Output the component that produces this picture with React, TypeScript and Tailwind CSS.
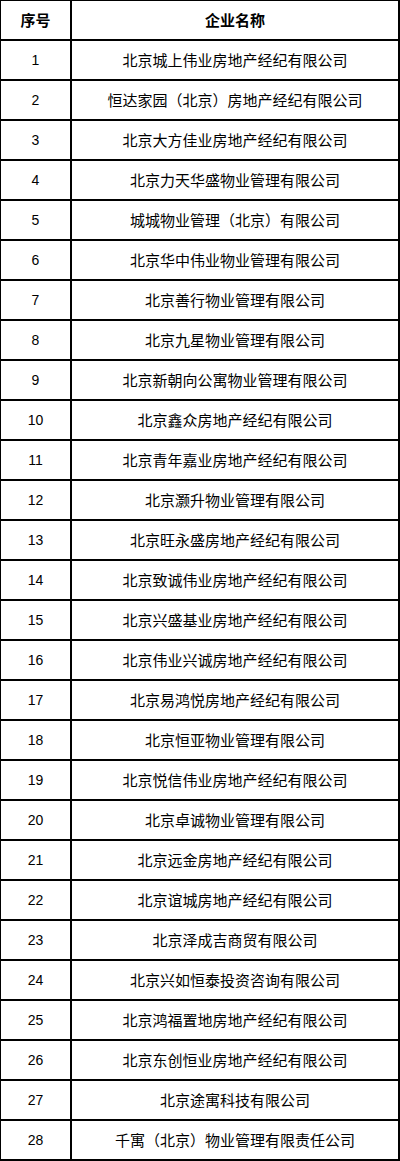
import React from "react";

const names = [
  "北京城上伟业房地产经纪有限公司",
  "恒达家园（北京）房地产经纪有限公司",
  "北京大方佳业房地产经纪有限公司",
  "北京力天华盛物业管理有限公司",
  "城城物业管理（北京）有限公司",
  "北京华中伟业物业管理有限公司",
  "北京善行物业管理有限公司",
  "北京九星物业管理有限公司",
  "北京新朝向公寓物业管理有限公司",
  "北京鑫众房地产经纪有限公司",
  "北京青年嘉业房地产经纪有限公司",
  "北京灏升物业管理有限公司",
  "北京旺永盛房地产经纪有限公司",
  "北京致诚伟业房地产经纪有限公司",
  "北京兴盛基业房地产经纪有限公司",
  "北京伟业兴诚房地产经纪有限公司",
  "北京易鸿悦房地产经纪有限公司",
  "北京恒亚物业管理有限公司",
  "北京悦信伟业房地产经纪有限公司",
  "北京卓诚物业管理有限公司",
  "北京远金房地产经纪有限公司",
  "北京谊城房地产经纪有限公司",
  "北京泽成吉商贸有限公司",
  "北京兴如恒泰投资咨询有限公司",
  "北京鸿福置地房地产经纪有限公司",
  "北京东创恒业房地产经纪有限公司",
  "北京途寓科技有限公司",
  "千寓（北京）物业管理有限责任公司",
];

export default function App() {
  return (
    <div className="w-[400px] h-[1161px] bg-white text-black" style={{ fontFamily: '"Noto Sans CJK SC", "Liberation Sans", sans-serif' }}>
      <div className="border-t border-l border-r-2 border-black w-[400px]">
        <div className="flex h-[40px] border-b-2 border-black font-bold text-[15px]">
          <div className="w-[71px] border-r-2 border-black flex items-center justify-center">序号</div>
          <div className="flex-1 flex items-center justify-center">企业名称</div>
        </div>
        {names.map((n, i) => (
          <div key={i} className="flex h-[40px] border-b-2 border-black">
            <div className="w-[71px] border-r-2 border-black flex items-center justify-center text-[14px]" style={{ fontFamily: '"Liberation Sans", sans-serif' }}>
              {i + 1}
            </div>
            <div className="flex-1 flex items-center justify-center text-[15px] tracking-[0px]">{n}</div>
          </div>
        ))}
      </div>
    </div>
  );
}
